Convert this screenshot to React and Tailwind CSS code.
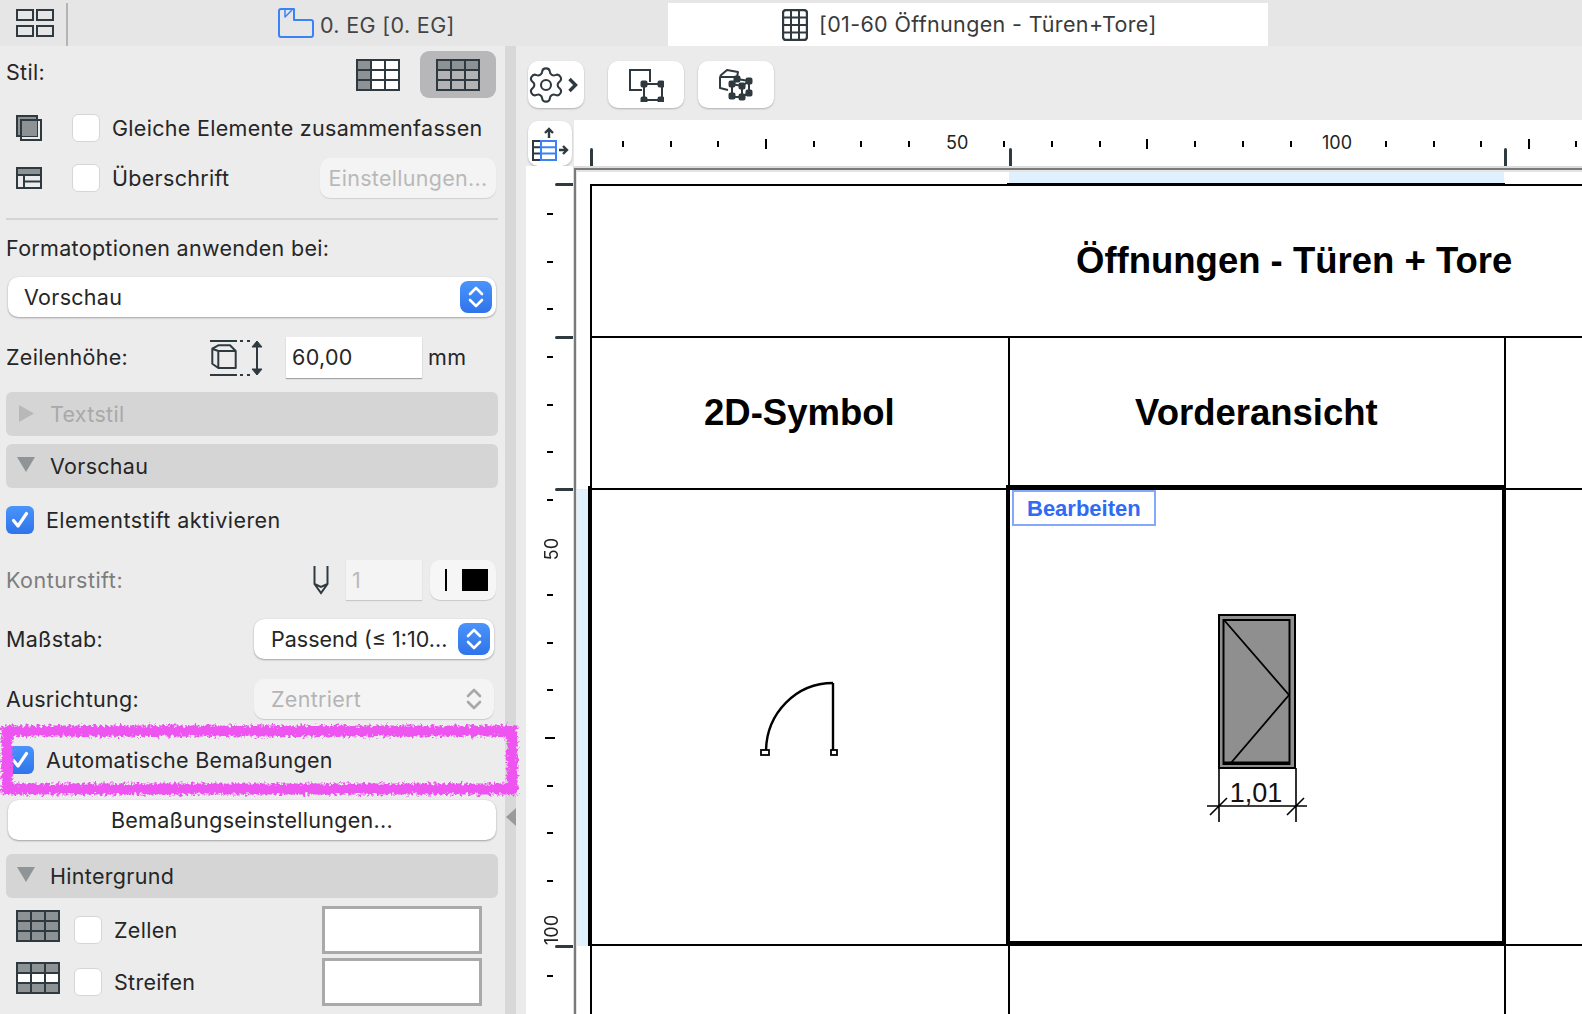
import { Settings } from "lucide-react";

const DARK = "#2f3a40";
const topTicks = [622, 670, 717, 813, 860, 908, 1003, 1051, 1099, 1194, 1242, 1290, 1385, 1433, 1480, 1575];
const topBigTicks = [765, 1146, 1528];
const topMarks = [591, 1010, 1505];
const leftTicks = [214, 262, 309, 357, 405, 452, 500, 595, 643, 690, 786, 833, 881, 976];
const leftMarks = [185, 338, 490, 947];

const Checkbox = ({ checked, className = "" }) => {
  if (checked) {
    return (
      <div className={`w-[28px] h-[28px] shrink-0 rounded-[6px] bg-gradient-to-b from-[#4a94fb] to-[#2f74ea] flex items-center justify-center ${className}`}>
        <svg width="20" height="20" viewBox="0 0 20 20" fill="none" stroke="white" strokeWidth="3.2" strokeLinecap="round" strokeLinejoin="round">
          <path d="M3.5 10.5 8 16 16.5 3.5" />
        </svg>
      </div>
    );
  }
  return <div className={`w-[28px] h-[28px] shrink-0 rounded-[6px] bg-white border border-[#d6d6d6] ${className}`} />;
};

const Stepper = ({ disabled }) => (
  <div className={`w-[32px] h-[32px] shrink-0 rounded-[8px] flex items-center justify-center ${disabled ? "" : "bg-gradient-to-b from-[#4a94fb] to-[#2f74ea]"}`}>
    <svg width="18" height="24" viewBox="0 0 18 24" fill="none" stroke={disabled ? "#a8a8a8" : "white"} strokeWidth="2.6" strokeLinecap="round" strokeLinejoin="round">
      <path d="M3 9 9 3l6 6M3 15l6 6 6-6" />
    </svg>
  </div>
);

const TableIcon = ({ type, className = "" }) => {
  const cols = [0, 1, 2];
  const rows = [0, 1, 2];
  const fillFor = (r, c) => {
    if (type === "column") return c === 0 ? "#8d9395" : "white";
    if (type === "header") return r === 0 ? "#8d9395" : "#b3b3b6";
    if (type === "stripes") return r === 1 ? "white" : "#8d9395";
    return "#8d9395";
  };
  return (
    <svg width="44" height="32" viewBox="0 0 44 32" className={`shrink-0 ${className}`}>
      {rows.map((r) =>
        cols.map((c) => (
          <rect key={`${r}-${c}`} x={1 + c * 14} y={1 + r * 10} width="14" height="10" fill={fillFor(r, c)} />
        ))
      )}
      <path d="M1 1h42v30H1zM15 1v30M29 1v30M1 11h42M1 21h42" fill="none" stroke={DARK} strokeWidth="2" />
    </svg>
  );
};

const SectionBar = ({ label, open, disabled, className = "" }) => (
  <div className={`mx-[6px] w-[492px] h-[44px] shrink-0 rounded-[6px] bg-[#d5d5d5] flex items-center ${className}`}>
    <div className="w-[44px] pl-[11px] flex">
      {open ? (
        <svg width="18" height="15" viewBox="0 0 18 15" className="-mt-[4px]">
          <path d="M0 0h18L9 15z" fill="#8f9496" />
        </svg>
      ) : (
        <svg width="15" height="17" viewBox="0 0 15 17" className="ml-[2px] -mt-[2px]">
          <path d="M0 0l15 8.5L0 17z" fill="#b8b8b8" />
        </svg>
      )}
    </div>
    <span className={disabled ? "text-[#a9a9a9]" : "text-[#262626]"}>{label}</span>
  </div>
);

const WhiteControl = ({ className = "", children }) => (
  <div className={`h-[40px] shrink-0 rounded-[10px] bg-white shadow-[0_1px_2px_rgba(0,0,0,0.3),0_0_1px_rgba(0,0,0,0.15)] flex items-center ${className}`}>
    {children}
  </div>
);

const Sidebar = () => (
  <aside className="w-[505px] shrink-0 bg-[#ececec] flex flex-col text-[#262626] text-[21.5px] tracking-[0.3px] [&_span]:-translate-y-[1px] [&_span]:pt-[2px]">
    <div className="mt-[5px] h-[47px] pl-[6px] pr-[9px] flex items-center shrink-0">
      <span className="flex-1 -mt-[5px]">Stil:</span>
      <TableIcon type="column" className="mt-[1px]" />
      <div className="ml-[20px] w-[76px] h-[47px] rounded-[9px] bg-[#b7b7ba] flex items-center justify-center">
        <TableIcon type="header" className="mt-[1px]" />
      </div>
    </div>
    <div className="mt-[16px] h-[28px] pl-[16px] flex items-center shrink-0">
      <svg width="26" height="26" viewBox="0 0 26 26" className="shrink-0">
        <rect x="1" y="1" width="20" height="20" fill="#8d9395" stroke={DARK} strokeWidth="2" />
        <path d="M5 22V5h20v20H5z" fill="none" stroke={DARK} strokeWidth="2" />
        <rect x="6" y="6" width="15" height="15" fill="#8d9395" />
      </svg>
      <Checkbox className="ml-[30px]" />
      <span className="ml-[12px] whitespace-nowrap">Gleiche Elemente zusammenfassen</span>
    </div>
    <div className="mt-[16px] h-[40px] pl-[16px] pr-[9px] flex items-center shrink-0">
      <svg width="26" height="22" viewBox="0 0 26 22" className="shrink-0">
        <rect x="1" y="1" width="24" height="7" fill="#8d9395" />
        <path d="M1 1h24v20H1zM1 8h24M8 8v13M8 14.500h17" fill="none" stroke={DARK} strokeWidth="2" />
      </svg>
      <Checkbox className="ml-[30px]" />
      <span className="ml-[12px] flex-1">Überschrift</span>
      <div className="w-[176px] h-[40px] rounded-[10px] bg-[#f4f4f4] shadow-[0_1px_1px_rgba(0,0,0,0.12)] flex items-center justify-center text-[#b9b9b9]">
        <span>Einstellungen...</span>
      </div>
    </div>
    <div className="mt-[20px] mx-[6px] w-[492px] h-[2px] bg-[#d4d4d4] shrink-0" />
    <div className="mt-[16px] h-[24px] pl-[6px] flex items-center shrink-0">
      <span>Formatoptionen anwenden bei:</span>
    </div>
    <WhiteControl className="mt-[17px] ml-[8px] w-[488px] pl-[16px] pr-[4px] justify-between">
      <span>Vorschau</span>
      <Stepper />
    </WhiteControl>
    <div className="mt-[20px] h-[41px] pl-[6px] flex items-center shrink-0">
      <span className="w-[204px]">Zeilenhöhe:</span>
      <svg width="54" height="38" viewBox="0 0 54 38" fill="none" stroke={DARK} className="shrink-0 mt-[1px]">
        <path d="M0 2h27M30 2h3M37 2h3M0 36h27M30 36h3M37 36h3" strokeWidth="2" />
        <path d="M2.300 9.700 8.300 6.300H20L25.700 12V29H8.300L2.300 24.700zM2.300 9.700 8.300 12H25.700M8.300 12V29" strokeWidth="2" strokeLinejoin="round" />
        <path d="M47 3v32" strokeWidth="2" />
        <path d="M42 8l5-6 5 6zM42 30l5 6 5-6z" fill={DARK} strokeWidth="1" />
      </svg>
      <div className="ml-[22px] w-[136px] h-[41px] bg-white shadow-[0_1px_1px_rgba(0,0,0,0.3)] flex items-center pl-[6px]">
        <span>60,00</span>
      </div>
      <span className="ml-[6px]">mm</span>
    </div>
    <SectionBar label="Textstil" disabled className="mt-[14px]" />
    <SectionBar label="Vorschau" open className="mt-[8px]" />
    <div className="mt-[18px] h-[28px] pl-[6px] flex items-center shrink-0">
      <Checkbox checked />
      <span className="ml-[12px] tracking-[0.45px]">Elementstift aktivieren</span>
    </div>
    <div className="mt-[26px] h-[40px] pl-[6px] pr-[9px] flex items-center shrink-0">
      <span className="flex-1 text-[#7d7d7d] tracking-[0.5px]">Konturstift:</span>
      <svg width="16" height="30" viewBox="0 0 16 30" fill="none" stroke={DARK} strokeWidth="2" className="shrink-0">
        <path d="M1.500 1v18L8 28l6.500-9V1M1.500 19 8 22l6.500-3" />
      </svg>
      <div className="ml-[17px] w-[76px] h-[40px] bg-[#f4f4f4] shadow-[0_1px_1px_rgba(0,0,0,0.15)] flex items-center pl-[6px] text-[#b9b9b9]">
        <span>1</span>
      </div>
      <div className="ml-[8px] w-[66px] h-[40px] rounded-[10px] bg-[#f6f6f6] shadow-[0_1px_1px_rgba(0,0,0,0.15)] flex items-center pl-[15px]">
        <div className="w-[2px] h-[22px] bg-black" />
        <div className="ml-[15px] w-[26px] h-[22px] bg-black" />
      </div>
    </div>
    <div className="mt-[19px] h-[40px] pl-[6px] flex items-center shrink-0">
      <span className="w-[248px]">Maßstab:</span>
      <WhiteControl className="w-[240px] pl-[17px] pr-[4px] justify-between">
        <span className="whitespace-nowrap tracking-[0px]">Passend (≤ 1:10...</span>
        <Stepper />
      </WhiteControl>
    </div>
    <div className="mt-[20px] h-[40px] pl-[6px] flex items-center shrink-0">
      <span className="w-[248px]">Ausrichtung:</span>
      <div className="w-[240px] h-[40px] rounded-[10px] bg-[#f4f4f4] shadow-[0_1px_1px_rgba(0,0,0,0.15)] flex items-center justify-between pl-[17px] pr-[4px] text-[#b4b4b4]">
        <span>Zentriert</span>
        <Stepper disabled />
      </div>
    </div>
    <div className="mt-[27px] h-[28px] pl-[6px] flex items-center shrink-0">
      <Checkbox checked />
      <span className="ml-[12px]">Automatische Bemaßungen</span>
    </div>
    <WhiteControl className="mt-[26px] ml-[8px] w-[488px] justify-center">
      <span>Bemaßungseinstellungen...</span>
    </WhiteControl>
    <SectionBar label="Hintergrund" open className="mt-[14px]" />
    <div className="mt-[8px] h-[48px] pl-[16px] flex items-center shrink-0">
      <TableIcon type="cells" className="-mt-[8px]" />
      <Checkbox className="ml-[14px]" />
      <span className="ml-[12px] w-[208px]">Zellen</span>
      <div className="w-[160px] h-[48px] border-[3px] border-[#a9a9a9] bg-white" />
    </div>
    <div className="mt-[4px] h-[48px] pl-[16px] flex items-center shrink-0">
      <TableIcon type="stripes" className="-mt-[8px]" />
      <Checkbox className="ml-[14px]" />
      <span className="ml-[12px] w-[208px]">Streifen</span>
      <div className="w-[160px] h-[48px] border-[3px] border-[#a9a9a9] bg-white" />
    </div>
  </aside>
);

const ToolButton = ({ className = "", children }) => (
  <div className={`h-[47px] rounded-[10px] bg-white shadow-[0_1px_2px_rgba(0,0,0,0.25)] flex items-center justify-center ${className}`}>
    {children}
  </div>
);

const Node = ({ x, y }) => <rect x={x - 2.500} y={y - 2.500} width="5" height="5" rx="1" fill={DARK} />;

const Toolbar = () => (
  <div className="h-[74px] shrink-0 flex items-start pt-[15px] pl-[2px]">
    <ToolButton className="w-[56px] justify-start">
      <Settings size={40} strokeWidth={1.250} color={DARK} className="shrink-0 -ml-[2px]" />
      <svg width="12" height="16" viewBox="0 0 12 16" fill="none" stroke={DARK} strokeWidth="3.400" className="shrink-0 ml-[1px]">
        <path d="M2.500 2l6 6-6 6" />
      </svg>
    </ToolButton>
    <ToolButton className="ml-[24px] w-[76px]">
      <svg width="36" height="34" viewBox="0 0 36 34" fill="none" stroke={DARK} strokeWidth="2">
        <path d="M22 14V2H2v20h12" />
        <path d="M16 16h18v16H16z" />
        <Node x={16} y={16} />
        <Node x={33} y={16} />
        <Node x={16} y={32} />
        <Node x={33} y={32} />
      </svg>
    </ToolButton>
    <ToolButton className="ml-[14px] w-[76px]">
      <svg width="36" height="36" viewBox="0 0 36 36" fill="none" stroke={DARK} strokeWidth="2" strokeLinejoin="round">
        <path d="M2 9l7-6 11 2-1 5H2v11l8 2M19 10l1-5" />
        <path d="M14 17l5-5 12 2v12l-8 4H14zM14 17l10 2 7-5M24 19v11" />
        <Node x={14} y={17} />
        <Node x={19} y={12} />
        <Node x={31} y={14} />
        <Node x={24} y={19} />
        <Node x={31} y={26} />
        <Node x={14} y={29} />
        <Node x={24} y={30} />
      </svg>
    </ToolButton>
  </div>
);

const TopRuler = () => (
  <div className="relative flex-1 h-[46px] bg-white overflow-hidden">
    {topTicks.map((x) => (
      <div key={x} className="absolute top-[21px] w-[2px] h-[6px] bg-black" style={{ left: x - 574 }} />
    ))}
    {topBigTicks.map((x) => (
      <div key={x} className="absolute top-[19px] w-[2px] h-[10px] bg-black" style={{ left: x - 574 }} />
    ))}
    {topMarks.map((x) => (
      <div key={x} className="absolute top-[28px] w-[3px] h-[18px] rounded-t-[2px] bg-[#2f3a40]" style={{ left: x - 575 }} />
    ))}
    <span className="absolute left-[372px] top-[11px] text-[18px] leading-[24px] text-[#222]">50</span>
    <span className="absolute left-[748px] top-[11px] text-[18px] leading-[24px] text-[#222]">100</span>
  </div>
);

const LeftRuler = () => (
  <div className="relative w-[47px] shrink-0 bg-white overflow-hidden">
    {leftTicks.map((y) => (
      <div key={y} className="absolute left-[21px] w-[6px] h-[2px] bg-black" style={{ top: y - 167 }} />
    ))}
    <div className="absolute left-[19px] top-[571px] w-[10px] h-[2px] bg-black" />
    {leftMarks.map((y) => (
      <div key={y} className="absolute left-[29px] w-[18px] h-[3px] rounded-l-[2px] bg-[#2f3a40]" style={{ top: y - 168 }} />
    ))}
    <span className="absolute left-[14px] top-[372px] text-[18px] leading-[24px] text-[#222] [writing-mode:vertical-rl] rotate-180">50</span>
    <span className="absolute left-[14px] top-[749px] text-[18px] leading-[24px] text-[#222] [writing-mode:vertical-rl] rotate-180">100</span>
  </div>
);

const DoorPlan = () => (
  <svg width="90" height="84" viewBox="0 0 90 84" fill="none" stroke="black" strokeWidth="2.400">
    <path d="M81 6v67" />
    <path d="M81 6C44 6 15 36 14 73" />
    <rect x="9" y="73" width="8" height="5" strokeWidth="1.800" />
    <rect x="79" y="73" width="6" height="5" strokeWidth="1.800" />
  </svg>
);

const DoorElevation = () => (
  <svg width="112" height="215" viewBox="0 0 112 215" fill="none" stroke="black">
    <rect x="19" y="5" width="76" height="153" fill="#8f8f8f" strokeWidth="2" />
    <rect x="23.500" y="10" width="66" height="144" strokeWidth="2" />
    <path d="M24 10l65 75-59 69" strokeWidth="1.800" />
    <path d="M24 153h66" strokeWidth="3" />
    <path d="M19 158v54M96 158v54M7 196h100M10 205l17-17M87 205l17-17" strokeWidth="1.600" />
    <text x="56" y="192" textAnchor="middle" fontFamily="'Liberation Sans', sans-serif" fontSize="27" fill="#111" stroke="none">
      1,01
    </text>
  </svg>
);

const Schedule = () => (
  <div className="relative flex-1 bg-white overflow-hidden font-['Liberation_Sans',sans-serif] text-black">
    <div className="absolute left-[432px] top-0 w-[495px] h-[11px] bg-[#dff1fe]" />
    <div className="absolute left-0 top-[317px] w-[11px] h-[457px] bg-[#dff1fe]" />
    <div className="ml-[13px] mt-[12px] grid grid-cols-[418px_496px_600px] grid-rows-[152px_152px_456px_100px] w-[1514px]">
      <div className="relative col-span-3 border-t-2 border-l-2 border-black flex items-center pl-[484px] text-[36.500px] font-bold">
        Öffnungen - Türen + Tore
        <div className="absolute left-[415px] -top-[3px] w-[498px] h-[3px] bg-black" />
      </div>
      <div className="border-t-2 border-l-2 border-black flex items-center pl-[112px] text-[36.500px] font-bold">2D-Symbol</div>
      <div className="border-t-2 border-l-2 border-black flex items-center pl-[125px] text-[36.500px] font-bold">Vorderansicht</div>
      <div className="border-t-2 border-l-2 border-black" />
      <div className="relative border-t-2 border-l-2 border-black pl-[160px] pt-[187px]">
        <DoorPlan />
        <div className="absolute -left-[4px] -top-[4px] w-[4px] h-[460px] bg-black" />
      </div>
      <div className="relative border-t-2 border-l-2 border-black pl-[190px] pt-[120px]">
        <DoorElevation />
        <div className="absolute -left-[4px] -top-[5px] w-[500px] h-[460px] border-4 border-black" />
        <div className="absolute left-[2px] top-0 w-[144px] h-[36px] border-2 border-[#85a8ff] bg-white flex items-center pl-[13px] text-[#2f6bf5] text-[22px] font-bold">
          Bearbeiten
        </div>
      </div>
      <div className="border-t-2 border-l-2 border-black" />
      <div className="border-t-2 border-l-2 border-black" />
      <div className="border-t-2 border-l-2 border-black" />
      <div className="border-t-2 border-l-2 border-black" />
    </div>
  </div>
);

const App = () => {
  return (
    <div className="relative w-[1582px] h-[1014px] overflow-hidden flex flex-col bg-[#ebebeb] font-['Inter',sans-serif]">
      <div className="h-[46px] shrink-0 bg-[#e6e6e6] flex text-[21.5px] tracking-[0.35px] text-[#444]">
        <div className="w-[68px] shrink-0 relative flex items-center pl-[16px]">
          <svg width="38" height="28" viewBox="0 0 38 28" fill="none" stroke={DARK} strokeWidth="2">
            <path d="M1 1h16v10H1zM21 1h16v10H21zM1 17h16v10H1zM21 17h16v10H21z" />
          </svg>
          <div className="absolute right-0 top-[3px] w-[2px] h-[43px] bg-[#b4b4b4]" />
        </div>
        <div className="w-[600px] flex items-center justify-start pl-[210px]">
          <svg width="36" height="30" viewBox="0 0 36 30" fill="none" stroke="#3b82f6" strokeWidth="2" strokeLinejoin="round" className="shrink-0">
            <path d="M1 3a2 2 0 0 1 2-2h13v11h17a2 2 0 0 1 2 2v13a2 2 0 0 1-2 2H3a2 2 0 0 1-2-2z" />
            <path d="M7 1v8l7-7" strokeWidth="1.500" />
          </svg>
          <span className="ml-[6px] pt-[4px] whitespace-nowrap">0. EG [0. EG]</span>
        </div>
        <div className="mt-[3px] w-[600px] h-[43px] bg-white flex items-center pl-[114px] text-[#3a3a3a]">
          <svg width="26" height="32" viewBox="0 0 26 32" fill="none" stroke={DARK} strokeWidth="2" className="shrink-0">
            <rect x="1" y="1" width="24" height="30" rx="3" strokeWidth="2.400" />
            <path d="M9 1v30M17 1v30M1 8.500h24M1 16h24M1 23.500h24" />
          </svg>
          <span className="ml-[11px] whitespace-nowrap">[01-60 Öffnungen - Türen+Tore]</span>
        </div>
      </div>
      <div className="flex-1 flex min-h-0">
        <Sidebar />
        <div className="relative w-[11px] shrink-0 bg-[#d8d8d8]">
          <svg width="10" height="18" viewBox="0 0 10 18" className="absolute left-[1px] top-[762px]">
            <path d="M10 0v18L0 9z" fill="#9a9a9a" />
          </svg>
        </div>
        <div className="flex-1 min-w-0 flex flex-col pl-[10px]">
          <Toolbar />
          <div className="h-[46px] shrink-0 flex">
            <div className="w-[48px] shrink-0 pt-[1px] pl-[2px]">
              <div className="w-[44px] h-[45px] rounded-[10px] bg-white shadow-[0_1px_2px_rgba(0,0,0,0.25)] flex items-center justify-center">
                <svg width="38" height="36" viewBox="0 0 38 36" fill="none" strokeWidth="2">
                  <path d="M18 12V3M14 7l4-4 4 4" stroke={DARK} strokeWidth="2.400" />
                  <path d="M10 15H2v19h8zM2 21.300h8M2 27.600h8" stroke={DARK} />
                  <path d="M10 15h15v19H10zM10 21.300h15M10 27.600h15" stroke="#3b82f6" />
                  <path d="M28 24h8M32 20l4 4-4 4" stroke={DARK} strokeWidth="2.400" />
                </svg>
              </div>
            </div>
            <TopRuler />
          </div>
          <div className="flex-1 min-h-0 flex">
            <LeftRuler />
            <div className="flex-1 min-w-0 flex border-t-2 border-l border-[#dddddd]">
              <div className="flex-1 min-w-0 flex border-t-2 border-l-2 border-[#7a7a7a]">
                <div className="flex-1 min-w-0 flex border-t-2 border-l border-[#e4e4e4]">
                  <Schedule />
                </div>
              </div>
            </div>
          </div>
        </div>
      </div>
      <svg width="526" height="84" viewBox="0 0 526 84" fill="none" className="absolute left-0 top-[718px] pointer-events-none">
        <defs>
          <filter id="marker" x="-5%" y="-20%" width="110%" height="140%">
            <feTurbulence type="fractalNoise" baseFrequency="0.35" numOctaves="2" seed="4" />
            <feDisplacementMap in="SourceGraphic" scale="9" />
          </filter>
        </defs>
        <rect x="7" y="13" width="505" height="58" stroke="#ee55f0" strokeWidth="11" filter="url(#marker)" />
      </svg>
    </div>
  );
};

export default App;
